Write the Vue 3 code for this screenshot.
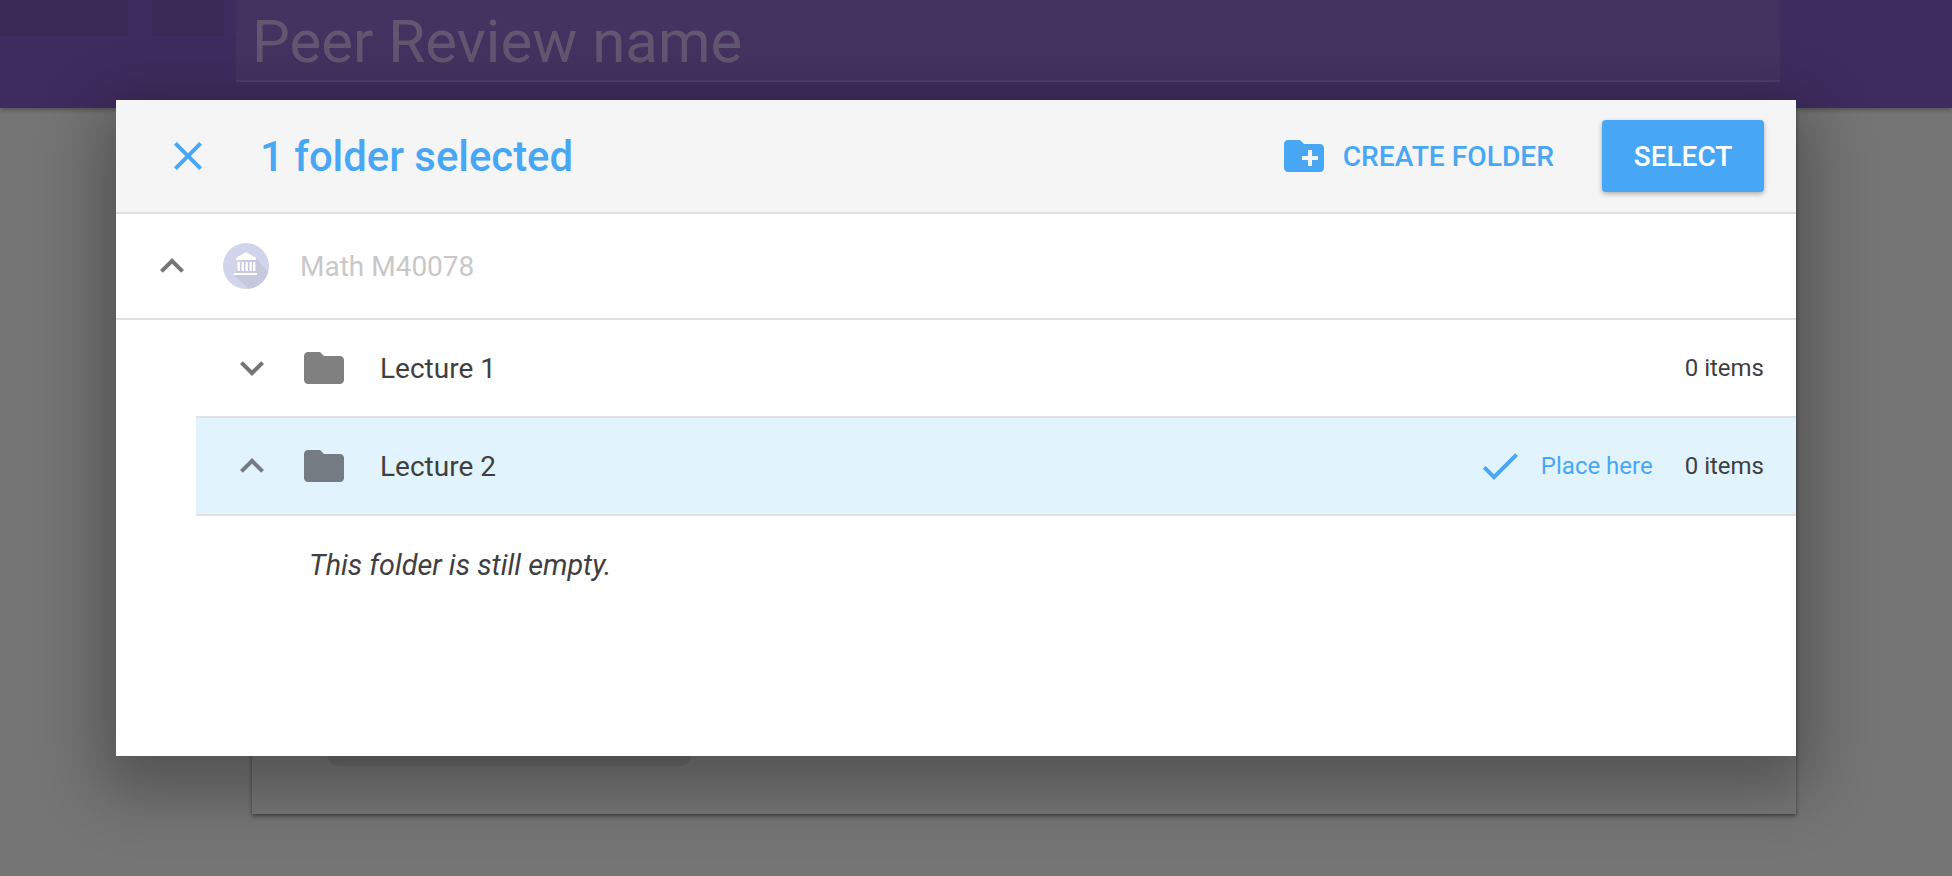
<script setup>
const folders = [
  { name: 'Lecture 1', open: false, selected: false },
  { name: 'Lecture 2', open: true, selected: true }
]
const chevronUp = 'M12 8l-6 6 1.41 1.41L12 10.83l4.59 4.58L18 14z'
const chevronDown = 'M16.59 8.59L12 13.17 7.41 8.59 6 10l6 6 6-6z'
const folderPath = 'M10 4H4c-1.1 0-2 .9-2 2v12c0 1.1.9 2 2 2h16c1.1 0 2-.9 2-2V8c0-1.1-.9-2-2-2h-8l-2-2z'
</script>

<template>
  <div class="page">
    <header class="topbar">
      <div class="block block-wide"></div>
      <div class="block block-small"></div>
      <div class="title-input">Peer Review name</div>
    </header>
    <section class="card">
      <div class="pill"></div>
    </section>

    <div class="modal">
      <div class="modal-head">
        <svg class="icon blue" viewBox="0 0 24 24">
          <path d="M19 6.41L17.59 5 12 10.59 6.41 5 5 6.41 10.59 12 5 17.59 6.41 19 12 13.41 17.59 19 19 17.59 13.41 12z" />
        </svg>
        <h1 class="head-title">1 folder selected</h1>
        <div class="create">
          <svg class="icon blue" viewBox="0 0 24 24">
            <path d="M20 6h-8l-2-2H4c-1.11 0-1.99.89-1.99 2L2 18c0 1.11.89 2 2 2h16c1.11 0 2-.89 2-2V8c0-1.11-.89-2-2-2zm-1 8h-3v3h-2v-3h-3v-2h3V9h2v3h3v2z" />
          </svg>
          <span class="create-label">CREATE FOLDER</span>
        </div>
        <button class="select">SELECT</button>
      </div>

      <div class="course">
        <svg class="icon grey" viewBox="0 0 24 24"><path :d="chevronUp" /></svg>
        <svg class="avatar" viewBox="0 0 46 46">
          <defs>
            <clipPath id="avatar-clip"><circle cx="23" cy="23" r="23" /></clipPath>
          </defs>
          <circle cx="23" cy="23" r="23" fill="#d1d5ec" />
          <polygon points="23,9 34,16 46,30 46,46 26,46 11,32" fill="#c6c9de" clip-path="url(#avatar-clip)" />
          <g fill="#fff">
            <polygon points="23,9 33,15 33,17 13,17 13,15" />
            <rect x="14.5" y="19" width="2.4" height="9" />
            <rect x="18.5" y="19" width="2.4" height="9" />
            <rect x="22.5" y="19" width="2.4" height="9" />
            <rect x="26.5" y="19" width="2.4" height="9" />
            <rect x="30" y="19" width="2.4" height="9" />
            <rect x="11" y="30" width="23" height="2" />
          </g>
        </svg>
        <span class="course-name">Math M40078</span>
      </div>

      <div class="tree">
        <div v-for="f in folders" :key="f.name" class="row" :class="{ selected: f.selected }">
          <svg class="icon" :class="f.selected ? 'grey-blue' : 'grey'" viewBox="0 0 24 24">
            <path :d="f.open ? chevronUp : chevronDown" />
          </svg>
          <svg class="icon folder" :class="f.selected ? 'grey-blue' : 'grey-folder'" viewBox="0 0 24 24">
            <path :d="folderPath" />
          </svg>
          <span class="row-name">{{ f.name }}</span>
          <template v-if="f.selected">
            <svg class="icon blue" viewBox="0 0 24 24">
              <path d="M9 16.17L4.83 12l-1.42 1.41L9 19 21 7l-1.41-1.41z" />
            </svg>
            <span class="place">Place here</span>
          </template>
          <span class="count">0 items</span>
        </div>
        <p class="empty">This folder is still empty.</p>
      </div>
    </div>
  </div>
</template>

<style>
html, body { margin: 0; padding: 0; background: #757575; }
</style>

<style scoped>
.page {
  position: relative;
  width: 1952px;
  height: 876px;
  overflow: hidden;
  background: #757575;
  font-family: Roboto, "Liberation Sans", sans-serif;
}
.topbar {
  display: flex;
  align-items: flex-start;
  height: 108px;
  background: #3f2c5f;
  box-shadow: 0 2px 4px rgba(0, 0, 0, .3);
  position: relative;
  z-index: 1;
}
.block { height: 36px; background: #3b2a56; }
.block-wide { width: 128px; }
.block-small { width: 72px; margin-left: 24px; }
.title-input {
  box-sizing: border-box;
  width: 1544px;
  height: 82px;
  margin-left: 12px;
  padding-left: 16px;
  background: #443260;
  border-bottom: 2px solid #4e3c69;
  color: #625770;
  font-size: 60px;
  line-height: 84px;
  white-space: nowrap;
}
.card {
  box-sizing: border-box;
  display: flex;
  flex-direction: column;
  justify-content: flex-end;
  width: 1544px;
  height: 706px;
  margin-left: 252px;
  padding: 0 0 48px 75px;
  background: #777;
  box-shadow: 0 2px 4px rgba(0, 0, 0, .45);
}
.pill {
  width: 365px;
  height: 60px;
  border-radius: 12px;
  background: rgba(0, 0, 0, .08);
}
.modal {
  position: absolute;
  left: 116px;
  top: 100px;
  z-index: 2;
  width: 1680px;
  height: 656px;
  background: #fff;
  box-shadow: 0 20px 60px 15px rgba(0, 0, 0, .3);
}
.modal-head {
  box-sizing: border-box;
  display: flex;
  align-items: center;
  height: 114px;
  padding: 0 32px 0 48px;
  background: #f5f5f5;
  border-bottom: 2px solid #e0e0e0;
}
.icon { flex: none; width: 48px; height: 48px; display: block; }
.blue { fill: #48a7f5; }
.grey { fill: #757575; }
.grey-folder { fill: #808080; }
.grey-blue { fill: #757b82; }
.head-title {
  margin: 0 0 0 48px;
  font-size: 41.8px;
  font-weight: 500;
  color: #48a7f5;
  white-space: nowrap;
}
.create {
  display: flex;
  align-items: center;
  margin-left: auto;
  margin-right: 48px;
}
.create-label {
  margin-left: 15px;
  font-size: 28.2px;
  font-weight: 500;
  color: #48a7f5;
  white-space: nowrap;
}
.select {
  width: 162px;
  height: 72px;
  padding: 0;
  border: 0;
  border-radius: 4px;
  background: #48a7f5;
  color: #fff;
  font-family: inherit;
  font-size: 28px;
  font-weight: 500;
  box-shadow: 0 2px 5px rgba(0, 0, 0, .3);
}
.course {
  box-sizing: border-box;
  display: flex;
  align-items: center;
  height: 106px;
  padding-left: 32px;
  border-bottom: 2px solid #e0e0e0;
}
.avatar { flex: none; width: 46px; height: 46px; margin-left: 27px; display: block; }
.course-name {
  margin-left: 31px;
  font-size: 28px;
  color: #c8c8c8;
  white-space: nowrap;
}
.tree { margin-left: 80px; }
.row {
  box-sizing: border-box;
  display: flex;
  align-items: center;
  height: 98px;
  padding: 0 32px;
  border-bottom: 2px solid #e0e0e0;
  font-size: 28px;
  color: #3f3f3f;
}
.selected { background: #e1f3fd; }
.folder { margin-left: 24px; }
.row-name { margin-left: 32px; margin-right: auto; white-space: nowrap; }
.place { margin-left: 17px; font-size: 24px; color: #48a7f5; white-space: nowrap; }
.count { margin-left: 32px; font-size: 24px; white-space: nowrap; }
.empty {
  margin: 32px 0 0 113px;
  font-size: 28.8px;
  line-height: 34px;
  font-style: italic;
  color: #3f3f3f;
}
</style>
